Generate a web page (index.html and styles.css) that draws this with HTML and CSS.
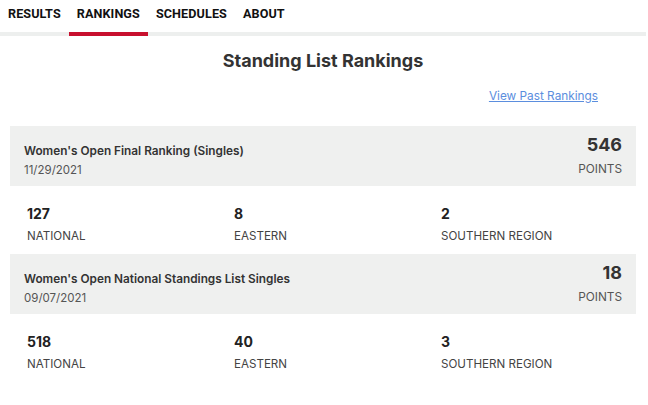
FILE: index.html
```html
<!DOCTYPE html>
<html>
<head>
<meta charset="utf-8">
<link rel="stylesheet" href="styles.css">
</head>
<body>
<nav class="tabs">
  <a class="tab">RESULTS</a>
  <a class="tab active">RANKINGS</a>
  <a class="tab">SCHEDULES</a>
  <a class="tab">ABOUT</a>
</nav>
<main class="content">
  <h1 class="title">Standing List Rankings</h1>
  <div class="linkrow"><a class="past" href="#">View Past Rankings</a></div>

  <section class="card">
    <div class="head">
      <div class="info">
        <div class="name">Women's Open Final Ranking (Singles)</div>
        <div class="date">11/29/2021</div>
      </div>
      <div class="pts">
        <div class="num">546</div>
        <div class="lbl">POINTS</div>
      </div>
    </div>
    <div class="stats">
      <div class="stat"><div class="snum">127</div><div class="slbl">NATIONAL</div></div>
      <div class="stat"><div class="snum">8</div><div class="slbl">EASTERN</div></div>
      <div class="stat"><div class="snum">2</div><div class="slbl">SOUTHERN REGION</div></div>
    </div>
  </section>

  <section class="card">
    <div class="head">
      <div class="info">
        <div class="name">Women's Open National Standings List Singles</div>
        <div class="date">09/07/2021</div>
      </div>
      <div class="pts">
        <div class="num">18</div>
        <div class="lbl">POINTS</div>
      </div>
    </div>
    <div class="stats">
      <div class="stat"><div class="snum">518</div><div class="slbl">NATIONAL</div></div>
      <div class="stat"><div class="snum">40</div><div class="slbl">EASTERN</div></div>
      <div class="stat"><div class="snum">3</div><div class="slbl">SOUTHERN REGION</div></div>
    </div>
  </section>
</main>
</body>
</html>
```
FILE: styles.css
```css
* { box-sizing: border-box; }
html, body { margin: 0; padding: 0; background: #fff; }
body {
  font-family: "Inter", "Roboto", "Liberation Sans", sans-serif;
  color: #222;
  width: 648px;
}
.tabs {
  display: flex;
  width: 646px;
  border-bottom: 4px solid #edefee;
  height: 36px;
}
.tab {
  display: block;
  padding: 6px 8px 0 8px;
  height: 32px;
  font-family: "Roboto", "Liberation Sans", sans-serif;
  font-size: 12.6px;
  letter-spacing: 0.1px;
  font-weight: 700;
  color: #111;
  line-height: 16px;
  position: relative;
}
.tab.active::after {
  content: "";
  position: absolute;
  left: 0; right: 0;
  bottom: -4px;
  height: 4px;
  background: #c8102e;
}
.content {
  padding: 0 12px 0 10px;
}
.title {
  margin: 13px 0 0 0;
  text-align: center;
  font-size: 18px;
  font-weight: 700;
  color: #333;
  line-height: 24px;
}
.linkrow {
  display: flex;
  justify-content: flex-end;
  padding: 15px 38px 0 0;
  height: 53px;
}
.past {
  font-size: 11.8px;
  color: #5b8ede;
  text-decoration: underline;
  line-height: 16px;
}
.card { margin: 0; }
.head {
  background: #eff0ef;
  display: flex;
  justify-content: space-between;
  padding: 8px 14px 0 14px;
  height: 60px;
}
.info { padding-top: 9px; }
.name {
  font-size: 11.8px;
  font-weight: 600;
  color: #333;
  line-height: 16px;
}
.date {
  font-size: 11.5px;
  color: #555;
  margin-top: 3px;
  line-height: 16px;
}
.pts { text-align: right; }
.num {
  font-size: 18px;
  font-weight: 700;
  color: #333;
  line-height: 22px;
}
.lbl {
  font-size: 11.8px;
  color: #555;
  margin-top: 5px;
  line-height: 16px;
}
.stats {
  display: grid;
  grid-template-columns: 207px 207px 1fr;
  padding: 19px 17px 0 17px;
  height: 68px;
}
.snum {
  font-size: 14px;
  font-weight: 700;
  color: #222;
  line-height: 18px;
}
.slbl {
  font-size: 11.6px;
  color: #444;
  margin-top: 5px;
  line-height: 16px;
}
```
